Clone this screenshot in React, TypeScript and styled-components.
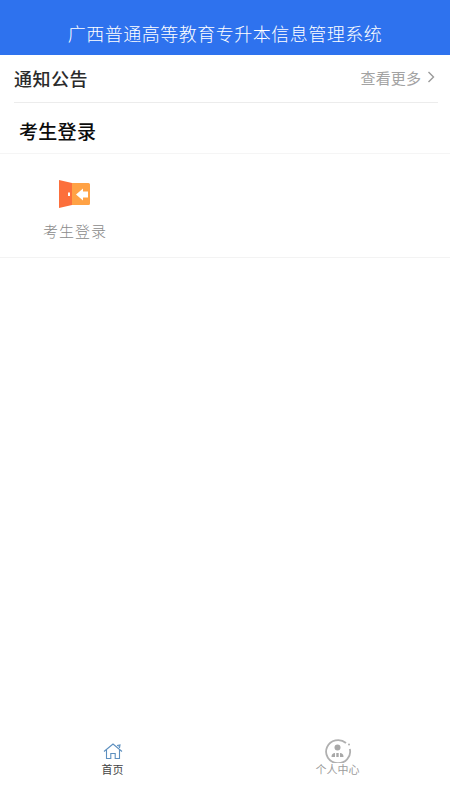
import React from 'react';
import styled, {createGlobalStyle} from 'styled-components';

const GlobalStyle = createGlobalStyle`
html, body {
    margin: 0;
    padding: 0;
    background: #fff;
}
body {
    font-family: "Noto Sans CJK SC", "Liberation Sans", sans-serif;
}
`
const Page = styled.div`
display: flex;
flex-direction: column;
width: 450px;
height: 800px;
overflow: hidden;
background-color: #fff;
`
const Header = styled.header`
display: flex;
align-items: center;
justify-content: center;
height: 55px;
padding-top: 10px;
box-sizing: border-box;
background-color: #2e72ee;
color: #fff;
font-size: 18px;
letter-spacing: 0.5px;
font-weight: 300;
`
const Notice = styled.div`
display: flex;
align-items: center;
justify-content: space-between;
height: 48px;
padding: 0 3px 1px 0;
box-sizing: border-box;
margin: 0 12px 0 14px;
border-bottom: 1px solid #ececec;
`
const NoticeTitle = styled.div`
font-size: 18px;
font-weight: 500;
letter-spacing: 0.5px;
color: #2b2b2b;
`
const More = styled.div`
display: flex;
align-items: center;
gap: 6px;
padding-bottom: 2px;
font-size: 15px;
letter-spacing: 0.1px;
color: #a3a3a3;
`
const SectionTitle = styled.div`
display: flex;
align-items: center;
height: 51px;
padding: 4px 0 0 19px;
box-sizing: border-box;
font-size: 19px;
font-weight: 500;
letter-spacing: 0.3px;
color: #0c0c0c;
border-bottom: 1px solid #f5f5f5;
`
const Grid = styled.div`
display: flex;
height: 104px;
padding-top: 5px;
box-sizing: border-box;
border-bottom: 1px solid #f3f3f3;
`
const GridItem = styled.div`
display: flex;
flex-direction: column;
align-items: center;
width: 150px;
padding-top: 21px;
`
const DoorIcon = styled.svg`
margin-right: 1px;
`
const GridLabel = styled.div`
margin-top: 12px;
font-size: 15px;
font-weight: 300;
letter-spacing: 1px;
line-height: 22px;
color: #8a8a8a;
`
const TabBar = styled.nav`
display: flex;
margin-top: auto;
height: 64px;
padding-bottom: 24px;
box-sizing: border-box;
`
const Tab = styled.div`
flex: 1;
display: flex;
flex-direction: column;
align-items: center;
justify-content: flex-end;
`
const TabLabel = styled.div<{active?: boolean}>`
font-size: 11px;
line-height: 14px;
margin-top: -1px;
color: ${({active}) => active ? '#444' : '#9c9c9c'};
`

const App = () => {
    return (
        <Page>
            <GlobalStyle/>
            <Header>广西普通高等教育专升本信息管理系统</Header>
            <Notice>
                <NoticeTitle>通知公告</NoticeTitle>
                <More>
                    查看更多
                    <svg width="8" height="12" viewBox="0 0 8 12" fill="none" stroke="#9a9a9a" strokeWidth="1.4">
                        <path d="M1.5 1 L6.5 6 L1.5 11"/>
                    </svg>
                </More>
            </Notice>
            <SectionTitle>考生登录</SectionTitle>
            <Grid>
                <GridItem>
                    <DoorIcon width="31" height="28" viewBox="0 0 31 28">
                        <path d="M10 3 H29.5 A1.5 1.5 0 0 1 31 4.5 V23.5 A1.5 1.5 0 0 1 29.5 25 H10 Z" fill="#ffa245"/>
                        <path d="M0 0 L13 3 V25 L0 28 Z" fill="#fc6f3c"/>
                        <rect x="9" y="12.5" width="2" height="3.5" fill="#fff"/>
                        <path d="M17 14.5 L24 8.5 V11.5 H29 V17.5 H24 V20.5 Z" fill="#fff"/>
                    </DoorIcon>
                    <GridLabel>考生登录</GridLabel>
                </GridItem>
            </Grid>
            <TabBar>
                <Tab>
                    <svg width="20" height="20" viewBox="0 0 20 20" fill="none" stroke="#5c8fbf" strokeWidth="1.1">
                        <path d="M1 8.5 L10 1 L19 8.5"/>
                        <path d="M14 2.5 L17 2 L16.5 5" fill="#a9c6e2"/>
                        <path d="M3.5 7 V15.5 H7.8 V10.5 H12.2 V15.5 H16.5 V7"/>
                    </svg>
                    <TabLabel active>首页</TabLabel>
                </Tab>
                <Tab>
                    <svg width="28" height="24" viewBox="0 0 28 24" fill="none">
                        <path d="M22 4 A12 11.5 0 1 0 25.8 10" stroke="#b0b0b0" strokeWidth="1.8"/>
                        <circle cx="25" cy="5.5" r="1" fill="#b0b0b0"/>
                        <circle cx="13.5" cy="8.5" r="3" fill="#a8a8a8"/>
                        <path d="M7.5 18 C7.5 15 9 14 11 14 V18 Z M12.3 14 H14.7 V18 H12.3 Z M16 14 C18 14 19.5 15 19.5 18 H16 Z" fill="#a8a8a8"/>
                    </svg>
                    <TabLabel>个人中心</TabLabel>
                </Tab>
            </TabBar>
        </Page>
    );
};

export default App;
